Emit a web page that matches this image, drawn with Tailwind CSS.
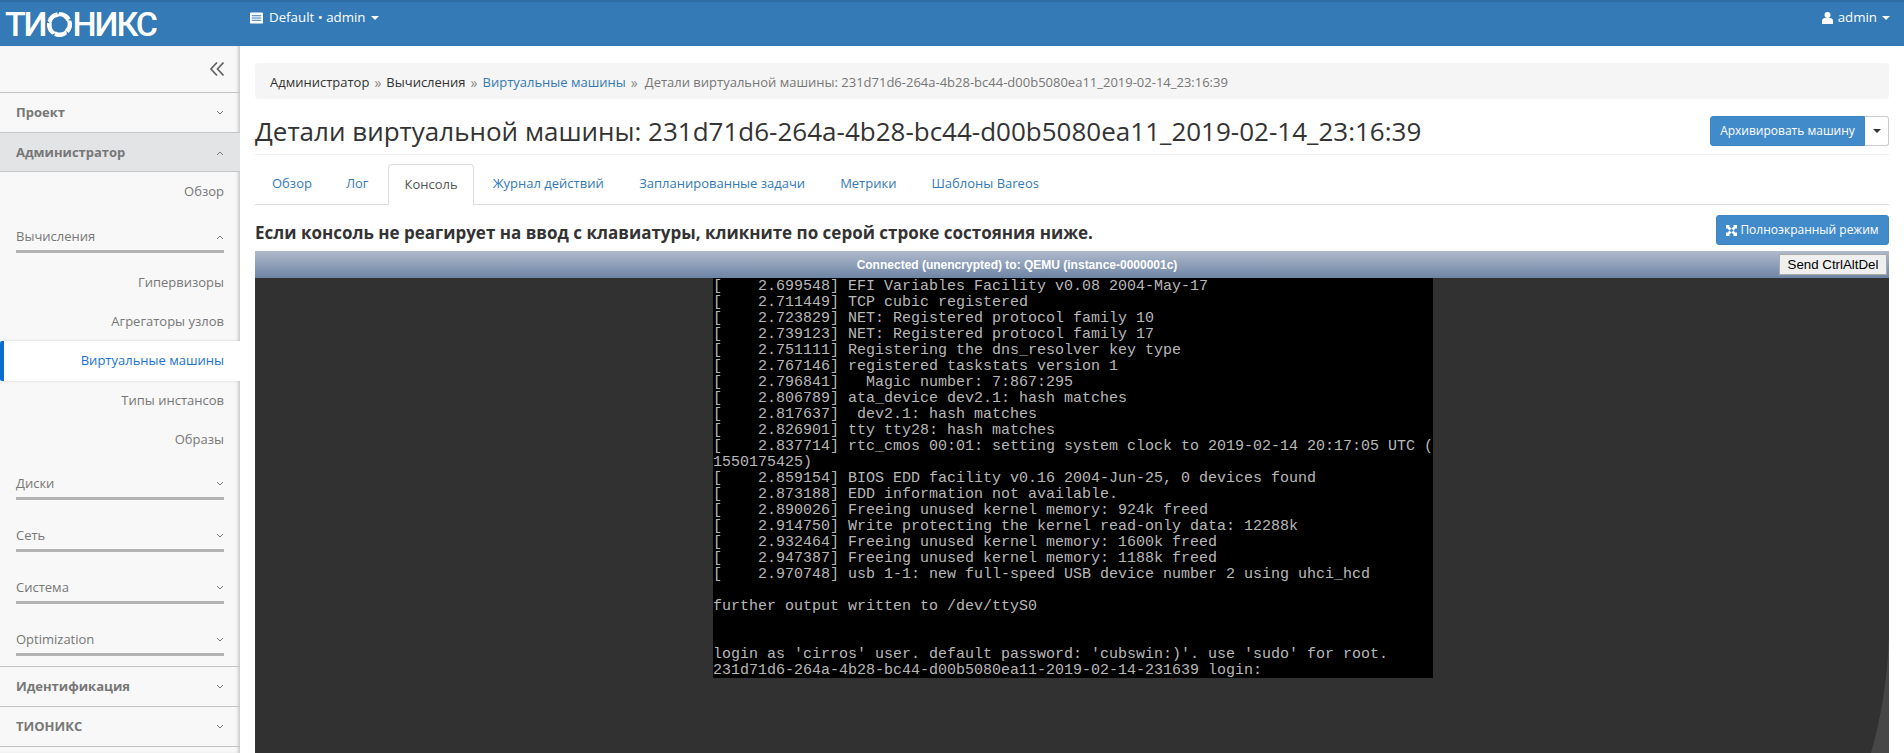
<!DOCTYPE html>
<html lang="ru">
<head>
  <meta charset="UTF-8" />
  <title>Детали виртуальной машины</title>
  <script src="https://cdn.jsdelivr.net/npm/@tailwindcss/browser@4"></script>
</head>
<body class="h-[753px] overflow-hidden bg-white font-['Open_Sans',sans-serif] text-[13px] text-[#333]">

  <!-- Top bar -->
  <header class="flex h-[46px] items-start border-t-2 border-[#2e6da4] bg-[#337ab7] text-white">
    <div class="flex h-[44px] w-[250px] items-center pl-[5px]">
      <span class="flex items-center font-['Roboto',sans-serif] text-[34px] leading-none font-medium tracking-[-2.100px]">
        ТИ<svg class="mx-[1px] h-[25px] w-[25px]" viewBox="-12.500 -12.500 25 25" fill="white">
          <path id="blade" d="M0-12.500A12.500 12.500 0 0 1 11-6L7-3.500A8.500 8.500 0 0 0-2.500-8Z"/>
          <use href="#blade" transform="rotate(72)"/>
          <use href="#blade" transform="rotate(144)"/>
          <use href="#blade" transform="rotate(216)"/>
          <use href="#blade" transform="rotate(288)"/>
        </svg>НИКС
      </span>
    </div>
    <div class="flex h-[32px] items-center gap-[6px]">
      <svg class="h-[12px] w-[13px]" viewBox="0 0 14 12" fill="white"><path d="M1 0h12a1 1 0 0 1 1 1v10a1 1 0 0 1-1 1H1a1 1 0 0 1-1-1V1a1 1 0 0 1 1-1zm1 3v1h10V3zm0 2.500v1h10v-1zM2 8v1h10V8z" fill-rule="evenodd"/></svg>
      <span class="text-[13.300px]">Default • admin</span>
      <span class="h-0 w-0 border-x-[4px] border-t-[4px] border-x-transparent border-t-white"></span>
    </div>
    <div class="ml-auto flex h-[32px] items-center gap-[5px] pr-[14px]">
      <svg class="h-[12px] w-[11px]" viewBox="0 0 11 12" fill="white"><circle cx="5.500" cy="3" r="3"/><path d="M0 12V9c0-2 1.500-3 3-3h5c1.500 0 3 1 3 3v3z"/></svg>
      <span class="text-[13.300px]">admin</span>
      <span class="h-0 w-0 border-x-[4px] border-t-[4px] border-x-transparent border-t-white"></span>
    </div>
  </header>

  <div class="flex h-[707px]">
    <!-- Sidebar -->
    <aside class="w-[240px] shrink-0 overflow-hidden bg-[#f8f8f8] text-[#777] shadow-[inset_-3px_0_3px_-1px_rgba(0,0,0,0.18)]">
      <div class="flex h-[47px] items-center justify-end border-b border-[#c4c4c4] pr-[16px]">
        <svg class="h-[14px] w-[14px]" viewBox="0 0 14 14" fill="none" stroke="#666" stroke-width="1.700"><path d="M7 0.500 1 7l6 6.500M13.500 0.500 7.500 7l6 6.500"/></svg>
      </div>
      <div class="flex h-[40px] items-center justify-between border-b border-[#c4c4c4] px-[16px] font-bold">Проект
        <svg class="h-[6px] w-[8px]" viewBox="0 0 8 6" fill="none" stroke="#777"><path d="m1 1 3 3 3-3"/></svg></div>
      <div class="flex h-[39px] items-center justify-between border-b border-[#c4c4c4] bg-[#e3e4e6] px-[16px] pt-[1px] font-bold">Администратор
        <svg class="h-[6px] w-[8px]" viewBox="0 0 8 6" fill="none" stroke="#777"><path d="m1 5 3-3 3 3"/></svg></div>

      <div class="flex h-[39px] items-center justify-end pr-[16px]">Обзор</div>

      <div class="mx-[16px] mt-[12px] flex h-[30px] items-center justify-between border-b-[3px] border-[#b3b3b3]">Вычисления
        <svg class="h-[6px] w-[8px]" viewBox="0 0 8 6" fill="none" stroke="#777"><path d="m1 5 3-3 3 3"/></svg></div>

      <div class="mt-[10px] flex h-[39px] items-center justify-end pr-[16px]">Гипервизоры</div>
      <div class="flex h-[39px] items-center justify-end pr-[16px]">Агрегаторы узлов</div>
      <div class="flex h-[40px] items-center justify-end rounded-l-[2px] border-l-4 border-[#0a6ccf] bg-white pr-[16px] text-[#1a73d4] shadow-[0_0_3px_rgba(0,0,0,0.15)]">Виртуальные машины</div>
      <div class="flex h-[39px] items-center justify-end pr-[16px]">Типы инстансов</div>
      <div class="flex h-[39px] items-center justify-end pr-[16px]">Образы</div>

      <div class="mx-[16px] mt-[11px] flex h-[30px] items-center justify-between border-b-[3px] border-[#b3b3b3]">Диски
        <svg class="h-[6px] w-[8px]" viewBox="0 0 8 6" fill="none" stroke="#777"><path d="m1 1 3 3 3-3"/></svg></div>
      <div class="mx-[16px] mt-[22px] flex h-[30px] items-center justify-between border-b-[3px] border-[#b3b3b3]">Сеть
        <svg class="h-[6px] w-[8px]" viewBox="0 0 8 6" fill="none" stroke="#777"><path d="m1 1 3 3 3-3"/></svg></div>
      <div class="mx-[16px] mt-[22px] flex h-[30px] items-center justify-between border-b-[3px] border-[#b3b3b3]">Система
        <svg class="h-[6px] w-[8px]" viewBox="0 0 8 6" fill="none" stroke="#777"><path d="m1 1 3 3 3-3"/></svg></div>
      <div class="mx-[16px] mt-[22px] flex h-[30px] items-center justify-between border-b-[3px] border-[#b3b3b3]">Optimization
        <svg class="h-[6px] w-[8px]" viewBox="0 0 8 6" fill="none" stroke="#777"><path d="m1 1 3 3 3-3"/></svg></div>

      <div class="mt-[10px] flex h-[41px] items-center justify-between border-y border-[#c4c4c4] px-[16px] font-bold">Идентификация
        <svg class="h-[6px] w-[8px]" viewBox="0 0 8 6" fill="none" stroke="#777"><path d="m1 1 3 3 3-3"/></svg></div>
      <div class="flex h-[40px] items-center justify-between border-b border-[#c4c4c4] px-[16px] font-bold">ТИОНИКС
        <svg class="h-[6px] w-[8px]" viewBox="0 0 8 6" fill="none" stroke="#777"><path d="m1 1 3 3 3-3"/></svg></div>
    </aside>

    <!-- Main -->
    <main class="flex w-[1649px] min-w-0 flex-col pl-[15px] pt-[17px]">
      <nav class="flex h-[36px] w-[1634px] shrink-0 items-center gap-[5px] rounded-[4px] bg-[#f5f5f5] px-[15px] pt-[3px]">
        <span>Администратор</span><span class="text-[14px] text-[#888]">»</span>
        <span>Вычисления</span><span class="text-[14px] text-[#888]">»</span>
        <span class="text-[#337ab7]">Виртуальные машины</span><span class="text-[14px] text-[#888]">»</span>
        <span class="ml-[2px] text-[#777]">Детали виртуальной машины: 231d71d6-264a-4b28-bc44-d00b5080ea11_2019-02-14_23:16:39</span>
      </nav>

      <div class="flex h-[56px] w-[1634px] shrink-0 items-center justify-between border-b border-[#eee] pt-[9px]">
        <h1 class="whitespace-nowrap text-[26px] leading-none">Детали виртуальной машины: 231d71d6-264a-4b28-bc44-d00b5080ea11_2019-02-14_23:16:39</h1>
        <div class="flex h-[30px] text-[12px]">
          <button class="w-[155px] rounded-l-[3px] border border-[#3f85c0] bg-[#428bca] text-white">Архивировать машину</button>
          <button class="flex w-[24px] items-center justify-center rounded-r-[3px] border border-l-0 border-[#ccc] bg-white"><span class="h-0 w-0 border-x-[4px] border-t-[4px] border-x-transparent border-t-[#333]"></span></button>
        </div>
      </div>

      <ul class="mt-[9px] flex h-[41px] w-[1634px] shrink-0 border-b border-[#ddd] text-[#337ab7]">
        <li class="flex h-[40px] items-center pl-[17px] pr-[17px]">Обзор</li>
        <li class="flex h-[40px] items-center pl-[17px] pr-[20px]">Лог</li>
        <li class="flex h-[41px] items-center rounded-t-[4px] border border-b-0 border-[#ddd] bg-white px-[15px] text-[#555]">Консоль</li>
        <li class="flex h-[40px] items-center pl-[19px] pr-[18px]">Журнал действий</li>
        <li class="flex h-[40px] items-center px-[17.500px]">Запланированные задачи</li>
        <li class="flex h-[40px] items-center px-[17.500px]">Метрики</li>
        <li class="flex h-[40px] items-center px-[17.500px]">Шаблоны Bareos</li>
      </ul>

      <div class="flex h-[46px] w-[1634px] shrink-0 items-start justify-between pt-[10px]">
        <p class="text-[17px] leading-[36px] font-bold">Если консоль не реагирует на ввод с клавиатуры, кликните по серой строке состояния ниже.</p>
        <button class="flex h-[30px] w-[173px] items-center justify-center gap-[3px] rounded-[3px] border border-[#3f85c0] bg-[#428bca] text-[12px] text-white">
          <svg class="h-[11px] w-[11px]" viewBox="0 0 11 11" fill="white"><path d="M0 0h4L3 1l2.500 2.500-2 2L1 3 0 4zM11 0v4l-1-1-2.500 2.500-2-2L8 1 7 0zM0 11V7l1 1 2.500-2.500 2 2L3 10l1 1zM11 11H7l1-1-2.500-2.500 2-2L10 8l1-1z"/></svg>
          Полноэкранный режим
        </button>
      </div>

      <!-- noVNC console -->
      <div class="flex h-[27px] w-[1634px] shrink-0 items-center bg-gradient-to-b from-[#b0bacb] to-[#6e85a6] font-['Liberation_Sans',sans-serif] text-[12px] font-bold text-white">
        <span class="flex-1 text-center">Connected (unencrypted) to: QEMU (instance-0000001c)</span>
        <button class="mr-[2px] h-[21px] w-[108px] border border-[#aaa] bg-[#efefef] text-[13.300px] font-normal text-black">Send CtrlAltDel</button>
      </div>
      <div class="relative h-[475px] w-[1634px] shrink-0 overflow-hidden bg-[#313131] pl-[458px]">
        <pre class="h-[400px] w-[720px] overflow-hidden bg-black pt-[1px] font-['Liberation_Mono',monospace] text-[15px] leading-[16px] text-[#b8b8b8]">[    2.699548] EFI Variables Facility v0.08 2004-May-17
[    2.711449] TCP cubic registered
[    2.723829] NET: Registered protocol family 10
[    2.739123] NET: Registered protocol family 17
[    2.751111] Registering the dns_resolver key type
[    2.767146] registered taskstats version 1
[    2.796841]   Magic number: 7:867:295
[    2.806789] ata_device dev2.1: hash matches
[    2.817637]  dev2.1: hash matches
[    2.826901] tty tty28: hash matches
[    2.837714] rtc_cmos 00:01: setting system clock to 2019-02-14 20:17:05 UTC (
1550175425)
[    2.859154] BIOS EDD facility v0.16 2004-Jun-25, 0 devices found
[    2.873188] EDD information not available.
[    2.890026] Freeing unused kernel memory: 924k freed
[    2.914750] Write protecting the kernel read-only data: 12288k
[    2.932464] Freeing unused kernel memory: 1600k freed
[    2.947387] Freeing unused kernel memory: 1188k freed
[    2.970748] usb 1-1: new full-speed USB device number 2 using uhci_hcd

further output written to /dev/ttyS0


login as 'cirros' user. default password: 'cubswin:)'. use 'sudo' for root.
231d71d6-264a-4b28-bc44-d00b5080ea11-2019-02-14-231639 login: </pre>
        <svg class="absolute right-0 bottom-0 h-[120px] w-[18px]" viewBox="0 0 18 120" fill="#474747"><path d="M18 0C17 45 10 85 0 120h18z"/></svg>
      </div>
    </main>
  </div>
</body>
</html>
